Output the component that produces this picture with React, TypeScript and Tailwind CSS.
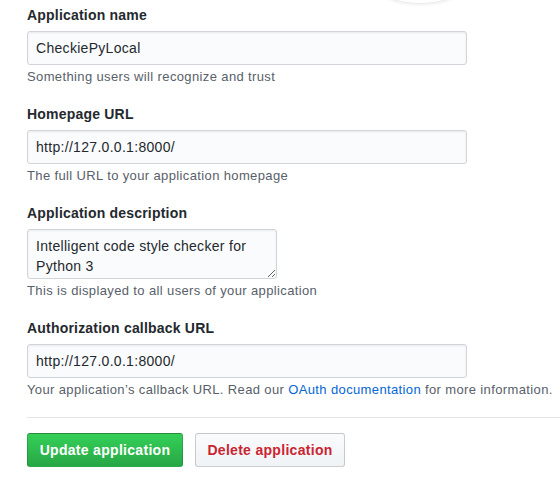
import React from "react";

interface FieldProps {
    label: string;
    value: string;
    note: React.ReactNode;
    multiline?: boolean;
}

function Field(props: FieldProps) {
    const { label, value, note, multiline } = props

    return (
        <div className="mb-[18px]">
            <label className="block h-5 mb-[6px] text-[14px] leading-5 font-bold tracking-[0.2px] text-[#24292e]">{label}</label>
            {multiline ? (
                <textarea
                    defaultValue={value}
                    className="block w-[250px] h-[50px] px-2 py-[6px] text-[14px] leading-5 tracking-[0.3px] text-[#24292e] bg-[#fafbfc] border border-[#d1d5da] rounded-[3px] shadow-[inset_0_1px_2px_rgba(27,31,35,0.075)] outline-none resize"
                />
            ) : (
                <input
                    defaultValue={value}
                    className="block w-[440px] h-[34px] px-2 text-[14px] leading-5 tracking-[0.3px] text-[#24292e] bg-[#fafbfc] border border-[#d1d5da] rounded-[3px] shadow-[inset_0_1px_2px_rgba(27,31,35,0.075)] outline-none"
                />
            )}
            <p className="mt-[3px] text-[13px] leading-[18px] tracking-[0.37px] text-[#586069]">{note}</p>
        </div>
    )
}

function App() {
    return (
        <div className="relative w-[560px] h-[483px] overflow-hidden bg-white font-['Liberation_Sans',Arial,sans-serif]">
            {/* avatar drop circle peeking from above */}
            <div className="absolute left-[329px] top-[-178px] w-[182px] h-[182px] rounded-full border border-[#eaecef] shadow-[0_1px_3px_rgba(27,31,35,0.08)]" />

            <div className="pt-[5px] pl-[27px]">
                <Field label="Application name" value="CheckiePyLocal" note="Something users will recognize and trust" />
                <Field label="Homepage URL" value="http://127.0.0.1:8000/" note="The full URL to your application homepage" />
                <Field
                    label="Application description"
                    value={"Intelligent code style checker for Python 3"}
                    note="This is displayed to all users of your application"
                    multiline
                />
                <Field
                    label="Authorization callback URL"
                    value="http://127.0.0.1:8000/"
                    note={
                        <>
                            Your application’s callback URL. Read our{" "}
                            <a href="#" className="text-[#0366d6]">OAuth documentation</a> for more information.
                        </>
                    }
                />

                <div className="border-t border-[#e1e4e8]" />

                <div className="flex gap-3 mt-[15px]">
                    <button className="h-[34px] w-[156px] rounded-[3px] border border-[rgba(27,31,35,0.2)] bg-gradient-to-b from-[#34d058] to-[#28a745] text-white text-[14px] font-bold tracking-[0.3px]">
                        Update application
                    </button>
                    <button className="h-[34px] w-[150px] rounded-[3px] border border-[rgba(27,31,35,0.2)] bg-gradient-to-b from-[#fafbfc] to-[#eff3f6] text-[#cb2431] text-[14px] font-bold tracking-[0.3px]">
                        Delete application
                    </button>
                </div>
            </div>
        </div>
    )
}

export default App
